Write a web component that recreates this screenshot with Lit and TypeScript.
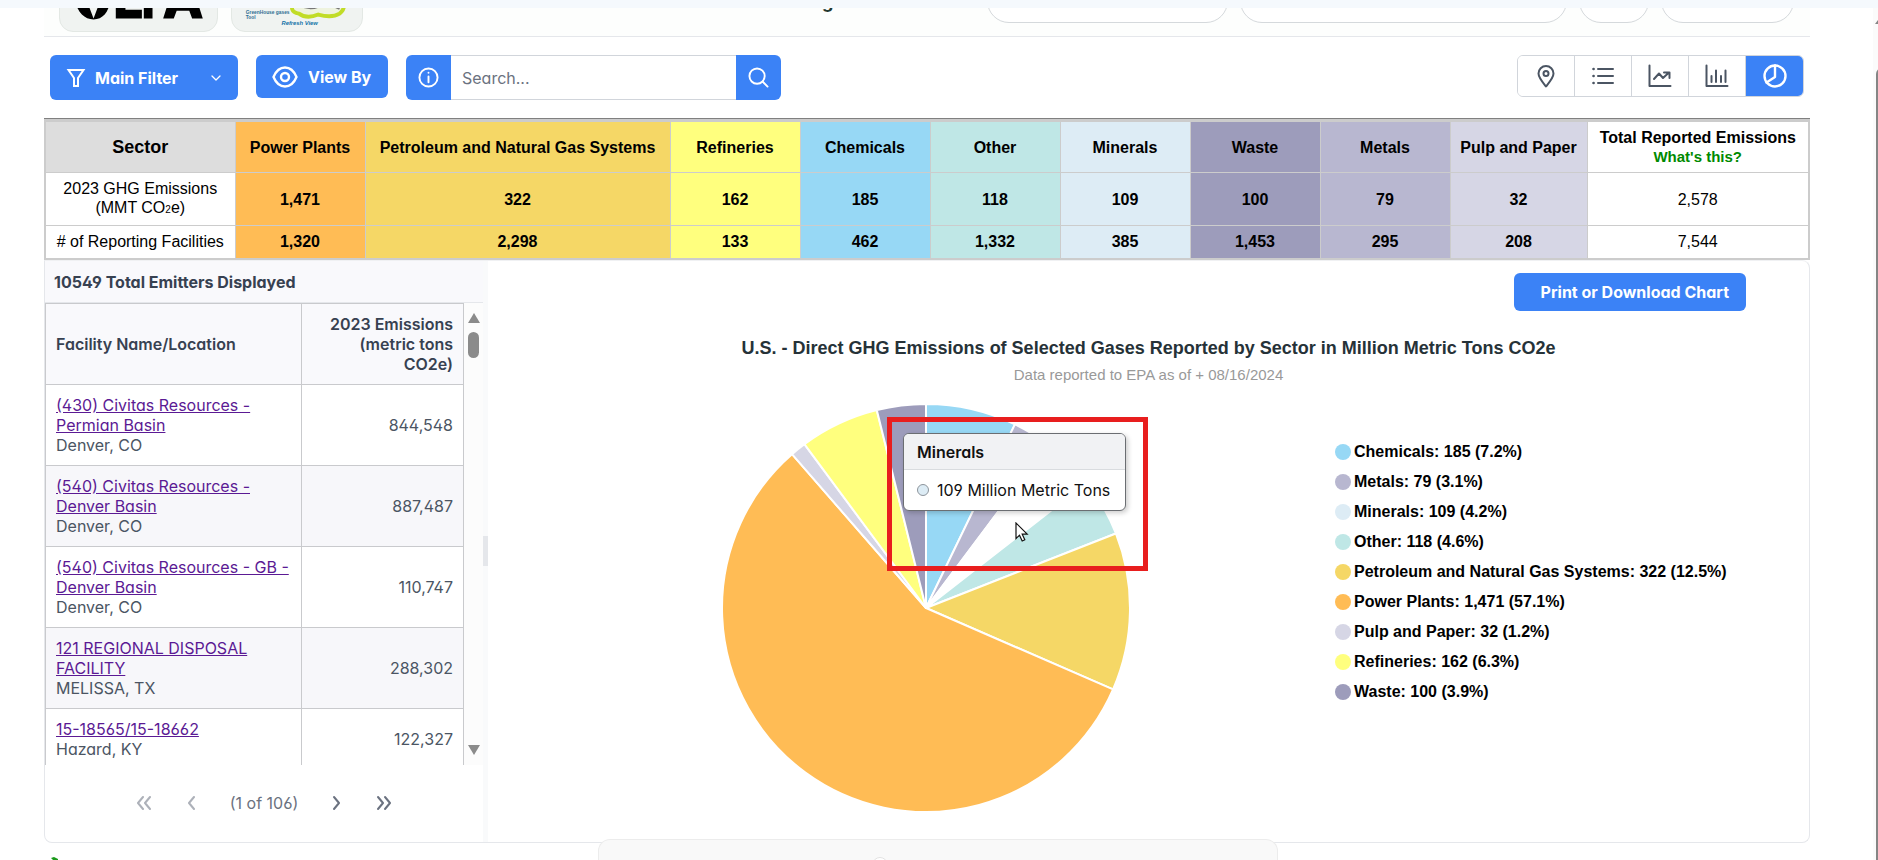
import { LitElement, html, svg, css } from "lit";
import { customElement, state } from "lit/decorators.js";

type Sector = { name: string; emissions: string; facilities: string; color: string };
type Slice = { name: string; value: number; label: string; color: string; fill?: string };

const SECTORS: Sector[] = [
  { name: "Power Plants", emissions: "1,471", facilities: "1,320", color: "#ffbc55" },
  { name: "Petroleum and Natural Gas Systems", emissions: "322", facilities: "2,298", color: "#f5d766" },
  { name: "Refineries", emissions: "162", facilities: "133", color: "#ffff7e" },
  { name: "Chemicals", emissions: "185", facilities: "462", color: "#97d8f5" },
  { name: "Other", emissions: "118", facilities: "1,332", color: "#bfe7e6" },
  { name: "Minerals", emissions: "109", facilities: "385", color: "#ddecf5" },
  { name: "Waste", emissions: "100", facilities: "1,453", color: "#9d9cbb" },
  { name: "Metals", emissions: "79", facilities: "295", color: "#b8b7d0" },
  { name: "Pulp and Paper", emissions: "32", facilities: "208", color: "#d6d6e5" },
];

const SLICES: Slice[] = [
  { name: "Chemicals", value: 185, label: "185 (7.2%)", color: "#97d8f5" },
  { name: "Metals", value: 79, label: "79 (3.1%)", color: "#b8b7d0" },
  { name: "Minerals", value: 109, label: "109 (4.2%)", color: "#ddecf5", fill: "#ffffff" },
  { name: "Other", value: 118, label: "118 (4.6%)", color: "#bfe7e6" },
  { name: "Petroleum and Natural Gas Systems", value: 322, label: "322 (12.5%)", color: "#f5d766" },
  { name: "Power Plants", value: 1471, label: "1,471 (57.1%)", color: "#ffbc55" },
  { name: "Pulp and Paper", value: 32, label: "32 (1.2%)", color: "#d6d6e5" },
  { name: "Refineries", value: 162, label: "162 (6.3%)", color: "#ffff7e" },
  { name: "Waste", value: 100, label: "100 (3.9%)", color: "#9d9cbb" },
];

const FACILITIES = [
  { name: "(430) Civitas Resources - Permian Basin", place: "Denver, CO", value: "844,548" },
  { name: "(540) Civitas Resources - Denver Basin", place: "Denver, CO", value: "887,487" },
  { name: "(540) Civitas Resources - GB - Denver Basin", place: "Denver, CO", value: "110,747" },
  { name: "121 REGIONAL DISPOSAL FACILITY", place: "MELISSA, TX", value: "288,302" },
  { name: "15-18565/15-18662", place: "Hazard, KY", value: "122,327" },
];

const VIEWS = [
  { id: "map", label: "Map", icon: svg`<path d="M12 22.500C8 17.500 4.500 13.500 4.500 9.500a7.500 7.500 0 0 1 15 0c0 4-3.500 8-7.500 13z"/><circle cx="12" cy="9.500" r="2.500"/>` },
  { id: "list", label: "List", icon: svg`<path d="M7 5h15M7 12h15M7 19h15"/><path d="M2.500 5h.1M2.500 12h.1M2.500 19h.1" stroke-width="2.600"/>` },
  { id: "trend", label: "Trend", icon: svg`<path d="M1.500 1.500v20.500h21"/><path d="M6 15l5-5.500 4 4.500 6-5.500M16 8.500h5.500v5.500"/>` },
  { id: "bar", label: "Bar chart", icon: svg`<path d="M1.500 1.500v20.500h21M6.500 12v6M11 6.500v11.500M16 12v6M20.500 6.500v11.500"/>` },
  { id: "pie", label: "Pie chart", icon: svg`<g stroke-width="2.400"><circle cx="12" cy="12" r="10.500"/><path d="M12 1.500v11.500l-8.500 5.500"/></g>` },
];

@customElement("pie-chart")
class PieChart extends LitElement {
  static styles = css`
    :host { display: block; width: 100%; }
    .pie { display: block; width: 100%; }
    .slice { stroke: #fff; stroke-width: 2; stroke-linejoin: round; }
  `;

  render() {
    const total = SLICES.reduce((sum, s) => sum + s.value, 0);
    const r = 204;
    let angle = -Math.PI / 2;
    const point = (a: number) => `${(r * Math.cos(a)).toFixed(2)} ${(r * Math.sin(a)).toFixed(2)}`;
    const paths = SLICES.map((s) => {
      const sweep = (s.value / total) * Math.PI * 2;
      const start = angle;
      angle += sweep;
      const d = `M0 0L${point(start)}A${r} ${r} 0 ${sweep > Math.PI ? 1 : 0} 1 ${point(angle)}Z`;
      return svg`<path class="slice" d=${d} fill=${s.fill ?? s.color}></path>`;
    });
    return html`<svg class="pie" viewBox="-205 -205 410 410" role="img" aria-label="Emissions by sector">${paths}</svg>`;
  }
}

@customElement("app-root")
class AppRoot extends LitElement {
  @state() private view = "pie";

  static styles = css`
    :host {
      display: block;
      height: 100vh;
      overflow: hidden;
      position: relative;
      background: #fff;
      color: #4b5563;
      font: 16px/20px Inter, "Noto Sans", sans-serif;
      font-feature-settings: "cv02", "cv03", "cv04", "cv11";
    }
    * { box-sizing: border-box; }
    button, input { font: inherit; font-feature-settings: inherit; }
    button { cursor: pointer; border: 0; padding: 0; }
    .icon { fill: none; stroke: currentColor; stroke-width: 2; stroke-linecap: round; stroke-linejoin: round; display: block; flex: none; }
    .strip { position: absolute; z-index: 3; inset: 0 0 auto; height: 8px; background: #f5f9fd; }
    .page { margin: 0 68px 0 44px; display: flex; flex-direction: column; }

    .top { height: 37px; border-bottom: 1px solid #e5e7eb; display: flex; align-items: flex-end; justify-content: space-between; padding: 0 16px 4px 15px; overflow: hidden; background: #fdfefd; }
    .logos { display: flex; gap: 13px; flex: none; }
    .logo { height: 60px; border: 1px solid #e3e8e4; border-radius: 14px; background: #f0f3f1; overflow: hidden; }
    .epa { width: 159px; }
    .flight { width: 132px; }
    .logo svg { display: block; width: 100%; height: 100%; }
    .title { margin: 0 0 0 30px; font-size: 18px; line-height: 24px; font-weight: 700; color: #22382f; padding-bottom: 18px; white-space: nowrap; }
    .nav { display: flex; gap: 12px; padding-bottom: 9px; }
    .pill { height: 44px; border: 1px solid #d5d9dc; border-radius: 22px; background: #fff; padding: 0 16px; font-weight: 600; line-height: 36px; color: #22382f; text-decoration: none; white-space: nowrap; }

    .toolbar { display: flex; align-items: flex-start; justify-content: space-between; padding: 18px 6px 19px 6px; }
    .tools { display: flex; gap: 18px; align-items: flex-start; }
    .primary { background: #3b82f6; color: #fff; font-weight: 700; display: flex; align-items: center; border-radius: 6px; }
    .filter { width: 188px; height: 45px; padding: 0 16px; gap: 9px; }
    .filter .chev { margin-left: auto; }
    .viewby { width: 132px; height: 43px; padding: 0 16px; gap: 10px; white-space: nowrap; }
    .search { display: flex; height: 45px; }
    .search .primary { width: 45px; justify-content: center; }
    .search .left-end { border-radius: 6px 0 0 6px; }
    .search .right-end { border-radius: 0 6px 6px 0; }
    .field { width: 285px; border: 1px solid #d1d5db; border-width: 1px 0; padding: 0 11px; color: #4b5563; background: #fff; outline: 0; border-radius: 0; }
    .field::placeholder { color: #6b7280; opacity: 1; }
    .views { display: flex; height: 42px; border: 1px solid #d1d5db; border-radius: 6px; overflow: hidden; }
    .view { width: 57px; display: flex; align-items: center; justify-content: center; background: #fff; color: #4b5563; border-right: 1px solid #d1d5db; }
    .view:last-child { border-right: 0; }
    .view.on { background: #3b82f6; color: #fff; }

    .sectors { width: 100%; table-layout: fixed; border-collapse: collapse; border: 2px solid #ccc; border-top-width: 3px; font-family: "Liberation Sans", Arial, sans-serif; line-height: 19px; color: #000; text-align: center; box-shadow: 0 -1px #808080; }
    .sectors th, .sectors td { border: 1px solid #ccc; padding: 6px 8px; font-weight: 700; }
    .sectors .plain { font-weight: 400; background: #fff; }
    .sectors .corner { background: #ddd; font-size: 18px; }
    .sectors thead tr { height: 51px; }
    .sectors .tall { height: 52px; }
    .sectors .short { height: 33px; }
    .c-first { width: 190px; } .c-wide { width: 305px; } .c-pulp { width: 137px; } .c-total { width: 222px; }
    .sectors .tot { padding: 6px 0; background: #fff; white-space: nowrap; }
    .sectors .head { padding: 6px 0; white-space: nowrap; }
    .help { display: block; font-size: 15px; color: #008a00; text-decoration: none; }
    .sub { font-size: 10px; }

    .panel { display: grid; grid-template-columns: 438px 5px minmax(0, 1fr); height: 583px; border: 1px solid #e5e7eb; border-top-color: #f0f1f3; border-radius: 0 8px 8px 8px; }
    .list { display: flex; flex-direction: column; min-width: 0; }
    .count { margin: 0; background: #f9f9fc; padding: 11px 9px; height: 42px; border-bottom: 1px solid #e5e7eb; font-size: 16px; font-weight: 700; color: #374151; }
    .scroller { display: flex; height: 462px; overflow: hidden; align-items: flex-start; }
    .facilities { width: 419px; border-collapse: collapse; table-layout: fixed; flex: none; }
    .facilities th, .facilities td { border: 1px solid #c9cacd; padding: 10px; text-align: left; font-weight: 400; color: #4b5563; }
    .facilities thead th { background: #f9f9fc; color: #374151; font-weight: 600; }
    .facilities .num { text-align: right; width: 162px; }
    .facilities tbody tr:nth-child(even) td { background: #f7f7fa; }
    .facilities a { color: #5b1a94; }
    .rail { flex: 1; height: 100%; display: flex; flex-direction: column; align-items: center; padding: 10px 0; background: #fcfcfc; }
    .rail svg { display: block; fill: #8b8b8b; flex: none; }
    .thumb { width: 11px; height: 26px; border-radius: 6px; background: #8b8b8b; margin: 9px 0 auto; }
    .pager { flex: 1; display: flex; align-items: center; justify-content: center; color: #6b7280; }
    .page-btn { width: 48px; height: 40px; background: none; color: #6b7280; display: flex; align-items: center; justify-content: center; }
    .page-btn:disabled { opacity: 0.55; }
    .where { padding: 0 14px; white-space: nowrap; }
    .gutter { background: #f9fafb; display: flex; align-items: center; }
    .grip { width: 5px; height: 30px; background: #e5e7eb; }

    .chart { min-width: 0; display: flex; flex-direction: column; font-family: "Liberation Sans", Arial, sans-serif; padding-top: 12px; }
    .print { align-self: flex-end; margin-right: 63px; width: 232px; height: 38px; padding: 0 17px; justify-content: flex-end; font-family: Inter, sans-serif; white-space: nowrap; }
    .chart-title { margin: 25px 0 0; text-align: center; font-size: 18px; line-height: 24px; color: #263238; }
    .asof { margin: 5px 0 0; text-align: center; color: #999; font-size: 15px; line-height: 20px; }
    .plot { display: grid; grid-template-columns: 410px minmax(0, auto); column-gap: 204px; padding: 18px 0 0 233px; align-items: start; position: relative; }
    .legend { list-style: none; margin: 0; padding: 34px 0 0; color: #000; font-weight: 700; white-space: nowrap; }
    .legend li { display: flex; align-items: center; gap: 3px; height: 30px; }
    .dot { width: 16px; height: 16px; border-radius: 50%; flex: none; }
    .callout { position: absolute; left: 399px; top: 32px; width: 261px; height: 154px; border: 5px solid #e81e1e; }
    .tip { position: absolute; left: 415px; top: 48px; width: 223px; border: 1px solid #6b6e72; border-radius: 6px; background: #fff; overflow: hidden; color: #111; font-family: Inter, sans-serif; box-shadow: 2px 2px 5px rgba(0, 0, 0, 0.2); white-space: nowrap; }
    .tip-head { background: #f1f2f4; border-bottom: 1px solid #d9dcdf; padding: 8px 13px 7px; font-weight: 600; }
    .tip-body { padding: 10px 13px; display: flex; align-items: center; gap: 8px; }
    .mark { width: 12px; height: 12px; border-radius: 50%; background: #ddecf5; border: 1px solid #8d949b; flex: none; }
    .cursor { position: absolute; left: 527px; top: 137px; display: block; }

    .dock { position: absolute; z-index: 2; left: 598px; bottom: 0; width: 680px; height: 21px; background: #f9f9f9; border: 1px solid #ececec; border-bottom: 0; border-radius: 12px 12px 0 0; overflow: hidden; }
    .knob { display: block; width: 16px; height: 16px; margin: 17px 0 0 273px; border: 1px solid #e2e2e2; border-radius: 50%; background: #fff; }
    .leaf { position: absolute; left: 50px; bottom: 0; display: block; }
    .window-bar { position: absolute; right: 0; top: 8px; bottom: 0; width: 5px; background: #fbfbfb; overflow: hidden; }
    .window-up { position: absolute; left: 2px; top: 8px; display: block; fill: #858585; }
    .window-thumb { position: absolute; left: 3px; top: 60px; bottom: 0; width: 11px; border-radius: 6px 0 0 0; background: #858585; }
  `;

  private icon(content: unknown, size = 24, box = "0 0 24 24", cls = "") {
    return html`<svg class="icon ${cls}" width=${size} height=${size} viewBox=${box} aria-hidden="true">${content}</svg>`;
  }

  render() {
    return html`
      <div class="strip"></div>
      <div class="page">
        <header class="top">
          <div class="logos">
            <div class="logo epa">
              <svg viewBox="0 0 159 60">
                <path d="M12 20C14 38 22 48 33 48C44 48 51 38 51 20L44 18L33 47L22 18Z"/>
                <path d="M56 0H66V38H83V47H56ZM85 0H94V47H85ZM105 47L120 0H131L146 47H135L132 39H119L116 47Z"/>
              </svg>
            </div>
            <div class="logo flight">
              <svg viewBox="0 0 132 60">
                <path d="M64 28Q56 40 68 42Q76 48 88 43Q102 47 110 42Q118 36 112 26" fill="#eef3df" stroke="#c1dc27" stroke-width="4"/>
                <path d="M68 33q10 6 20 2M94 30l16 7" fill="none" stroke="#777" stroke-width="2"/>
                <text x="13" y="36" font-size="5" font-weight="700" fill="#56636b" font-family="Liberation Sans">Information on</text>
                <text x="13" y="42" font-size="5" font-weight="700" fill="#2f6f93" font-family="Liberation Sans">GreenHouse gases</text>
                <text x="13" y="48" font-size="5" font-weight="700" fill="#2f6f93" font-family="Liberation Sans">Tool</text>
                <text x="50" y="54" font-size="6" font-weight="700" font-style="italic" fill="#1272a8" font-family="Liberation Sans">Refresh View</text>
              </svg>
            </div>
          </div>
          <h1 class="title">2023 Greenhouse Gas Emissions from Large Facilities</h1>
          <nav class="nav">
            <a class="pill" href="#">Greenhouse Gas Inventory</a>
            <a class="pill" href="#">Facilities and Emissions Data Sources</a>
            <a class="pill" href="#">Help</a>
            <a class="pill" href="#">Accessibility</a>
          </nav>
        </header>

        <div class="toolbar">
          <div class="tools">
            <button class="primary filter">
              ${this.icon(svg`<path d="M2.500 2h15L12 10v8H8v-8z" stroke-linejoin="miter"/>`, 20, "0 0 20 20")}
              Main Filter
              ${this.icon(svg`<path d="M2 4l4 4 4-4" stroke-width="1.300"/>`, 12, "0 0 12 12", "chev")}
            </button>
            <button class="primary viewby">
              ${this.icon(svg`<g stroke-width="2.400"><path d="M1.500 12C4 6 8 2.500 13 2.500s9 3.500 11.500 9.500C22 18 18 21.500 13 21.500S4 18 1.500 12z"/><circle cx="13" cy="12" r="4"/></g>`, 26, "0 0 26 24")}
              View By
            </button>
            <div class="search">
              <button class="primary left-end" aria-label="Search information">
                ${this.icon(svg`<circle cx="11" cy="11" r="9.500"/><path d="M11 10v6M11 6v.1"/>`, 21, "0 0 22 22")}
              </button>
              <input class="field" type="text" aria-label="Search" placeholder="Search..." />
              <button class="primary right-end" aria-label="Search">
                ${this.icon(svg`<circle cx="9.500" cy="9.500" r="8"/><path d="M15.500 15.500l5 5"/>`, 21, "0 0 22 22")}
              </button>
            </div>
          </div>
          <div class="views">
            ${VIEWS.map((v) => html`
              <button class="view ${v.id === this.view ? "on" : ""}" aria-label=${v.label} @click=${() => (this.view = v.id)}>
                ${this.icon(v.icon)}
              </button>`)}
          </div>
        </div>

        <table class="sectors">
          <colgroup>
            <col class="c-first" /><col /><col class="c-wide" /><col span="6" /><col class="c-pulp" /><col class="c-total" />
          </colgroup>
          <thead>
            <tr>
              <th class="corner" scope="col">Sector</th>
              ${SECTORS.map((s) => html`<th class="head" scope="col" style="background:${s.color}">${s.name}</th>`)}
              <th class="tot" scope="col">Total Reported Emissions<a class="help" href="#">What's this?</a></th>
            </tr>
          </thead>
          <tbody>
            <tr class="tall">
              <th class="plain" scope="row">2023 GHG Emissions (MMT CO<span class="sub">2</span>e)</th>
              ${SECTORS.map((s) => html`<td style="background:${s.color}">${s.emissions}</td>`)}
              <td class="plain">2,578</td>
            </tr>
            <tr class="short">
              <th class="plain tot" scope="row"># of Reporting Facilities</th>
              ${SECTORS.map((s) => html`<td style="background:${s.color}">${s.facilities}</td>`)}
              <td class="plain">7,544</td>
            </tr>
          </tbody>
        </table>

        <main class="panel">
          <section class="list">
            <h2 class="count">10549 Total Emitters Displayed</h2>
            <div class="scroller">
              <table class="facilities">
                <thead>
                  <tr><th scope="col">Facility Name/Location</th><th class="num" scope="col">2023 Emissions (metric tons CO2e)</th></tr>
                </thead>
                <tbody>
                  ${FACILITIES.map((f) => html`
                    <tr><td><a href="#">${f.name}</a><br />${f.place}</td><td class="num">${f.value}</td></tr>`)}
                </tbody>
              </table>
              <div class="rail">
                <svg width="12" height="10" viewBox="0 0 12 10"><path d="M6 0L12 10H0z"/></svg>
                <span class="thumb"></span>
                <svg width="12" height="10" viewBox="0 0 12 10"><path d="M0 0H12L6 10z"/></svg>
              </div>
            </div>
            <div class="pager">
              <button class="page-btn" disabled aria-label="First page">${this.icon(svg`<path d="M7 2L2 8l5 6M14 2L9 8l5 6"/>`, 16, "0 0 16 16")}</button>
              <button class="page-btn" disabled aria-label="Previous page">${this.icon(svg`<path d="M10 2L5 8l5 6"/>`, 16, "0 0 16 16")}</button>
              <span class="where">(1 of 106)</span>
              <button class="page-btn" aria-label="Next page">${this.icon(svg`<path d="M6 2l5 6-5 6"/>`, 16, "0 0 16 16")}</button>
              <button class="page-btn" aria-label="Last page">${this.icon(svg`<path d="M2 2l5 6-5 6M9 2l5 6-5 6"/>`, 16, "0 0 16 16")}</button>
            </div>
          </section>
          <div class="gutter"><span class="grip"></span></div>
          <section class="chart">
            <button class="primary print">Print or Download Chart</button>
            <h2 class="chart-title">U.S. - Direct GHG Emissions of Selected Gases Reported by Sector in Million Metric Tons CO2e</h2>
            <p class="asof">Data reported to EPA as of + 08/16/2024</p>
            <div class="plot">
              <pie-chart></pie-chart>
              <ul class="legend">
                ${SLICES.map((s) => html`<li><span class="dot" style="background:${s.color}"></span>${s.name}: ${s.label}</li>`)}
              </ul>
              <div class="callout"></div>
              <div class="tip" role="tooltip">
                <div class="tip-head">Minerals</div>
                <div class="tip-body"><span class="mark"></span>109 Million Metric Tons</div>
              </div>
              <svg class="cursor" width="14" height="20" viewBox="0 0 14 20"><path d="M1 1v15.500l3.500-3.300 2.700 5.800 2.600-1.200-2.600-5.600h5z" fill="#fff" stroke="#111" stroke-width="1.200"/></svg>
            </div>
          </section>
        </main>
      </div>
      <svg class="leaf" width="10" height="3" viewBox="0 0 10 3"><path d="M1 1l3-1 4 2v1H3z" fill="#1b9a1b"/></svg>
      <div class="dock"><span class="knob"></span></div>
      <div class="window-bar">
        <svg class="window-up" width="12" height="8" viewBox="0 0 12 8"><path d="M6 0L12 8H0z"/></svg>
        <span class="window-thumb"></span>
      </div>
    `;
  }
}
